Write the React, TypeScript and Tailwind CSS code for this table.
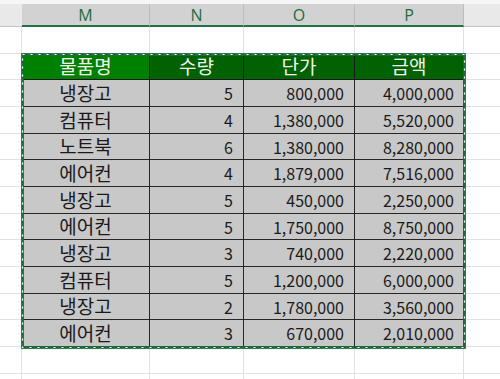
const COLS = ['M', 'N', 'O', 'P'];
const WIDTHS = ['w-[128px]', 'w-[94px]', 'w-[111px]', 'w-[109px]'];

const ROWS: [string, number, string, string][] = [
  ['냉장고', 5, '800,000', '4,000,000'],
  ['컴퓨터', 4, '1,380,000', '5,520,000'],
  ['노트북', 6, '1,380,000', '8,280,000'],
  ['에어컨', 4, '1,879,000', '7,516,000'],
  ['냉장고', 5, '450,000', '2,250,000'],
  ['에어컨', 5, '1,750,000', '8,750,000'],
  ['냉장고', 3, '740,000', '2,220,000'],
  ['컴퓨터', 5, '1,200,000', '6,000,000'],
  ['냉장고', 2, '1,780,000', '3,560,000'],
  ['에어컨', 3, '670,000', '2,010,000'],
];

// row heights follow Excel's 26.67px rows
const HEIGHTS = ['h-[27px]', 'h-[27px]', 'h-[26px]', 'h-[27px]', 'h-[27px]', 'h-[26px]', 'h-[27px]', 'h-[27px]', 'h-[26px]', 'h-[27px]'];

const font = { fontFamily: '"Noto Sans CJK KR", "Noto Sans", sans-serif' };

function EmptyRow({ h }: { h: string }) {
  return (
    <div className={`flex ${h}`}>
      <div className="w-[22px] border-b border-r border-[#e1e1e1]" />
      {WIDTHS.map((w, i) => (
        <div key={i} className={`${w} border-b border-r border-[#e1e1e1]`} />
      ))}
      <div className="flex-1 border-b border-[#e1e1e1]" />
    </div>
  );
}

function Marquee() {
  return (
    <svg className="absolute left-[21px] top-[53px]" width="445" height="296">
      <rect x="1.5" y="1.5" width="442" height="293" fill="none" stroke="#1d6b3c" strokeWidth="2.8" />
      <rect x="1.5" y="1.5" width="442" height="293" fill="none" stroke="#ffffff" strokeWidth="1.2" strokeDasharray="2 6" />
    </svg>
  );
}

export default function App() {
  return (
    <div className="relative w-[500px] h-[379px] overflow-hidden bg-white text-[#1a1a1a]" style={font}>
      <div className="h-[4px] bg-[#f6f6f6]" />

      {/* column headers */}
      <div className="flex h-[23px] text-[16px]" style={{ fontFamily: '"Open Sans", sans-serif' }}>
        <div className="w-[22px] bg-[#e9e9e9] border-b border-[#c4c4c4]" />
        {COLS.map((c, i) => (
          <div
            key={c}
            className={`${WIDTHS[i]} flex items-center justify-center bg-[#d2d2d2] text-[#1e6b40] border-r border-[#bdbdbd] border-b-2 border-b-[#217346]`}
          >
            {c}
          </div>
        ))}
        <div className="flex-1 bg-[#e9e9e9] border-b border-[#c4c4c4]" />
      </div>

      <EmptyRow h="h-[27px]" />

      {/* table header */}
      <div className="flex h-[26px] text-[19px]">
        <div className="w-[22px] border-b border-[#e1e1e1]" />
        {['물품명', '수량', '단가', '금액'].map((t, i) => (
          <div
            key={t}
            className={`${WIDTHS[i]} flex items-center justify-center text-[#f4f4ec] border-b border-r border-[#1a1a1a] ${
              i === 0 ? 'bg-[#008000]' : 'bg-[#006200]'
            }`}
          >
            {t}
          </div>
        ))}
        <div className="flex-1 border-b border-[#e1e1e1]" />
      </div>

      {ROWS.map((r, ri) => (
        <div key={ri} className={`flex ${HEIGHTS[ri]} text-[16px]`}>
          <div className="w-[22px] border-b border-[#e1e1e1]" />
          <div className={`${WIDTHS[0]} flex items-center justify-center text-[19px] bg-[#c8c8c8] border-b border-r border-[#262626]`}>
            {r[0]}
          </div>
          <div className={`${WIDTHS[1]} flex items-center justify-end pr-[10px] bg-[#c8c8c8] border-b border-r border-[#262626]`}>
            {r[1]}
          </div>
          <div className={`${WIDTHS[2]} flex items-center justify-end pr-[10px] bg-[#c8c8c8] border-b border-r border-[#262626]`}>
            {r[2]}
          </div>
          <div className={`${WIDTHS[3]} flex items-center justify-end pr-[9px] bg-[#c8c8c8] border-b border-r border-[#262626]`}>
            {r[3]}
          </div>
          <div className="flex-1 border-b border-[#e1e1e1]" />
        </div>
      ))}

      <EmptyRow h="h-[27px]" />
      <EmptyRow h="h-[27px]" />

      <Marquee />
    </div>
  );
}
